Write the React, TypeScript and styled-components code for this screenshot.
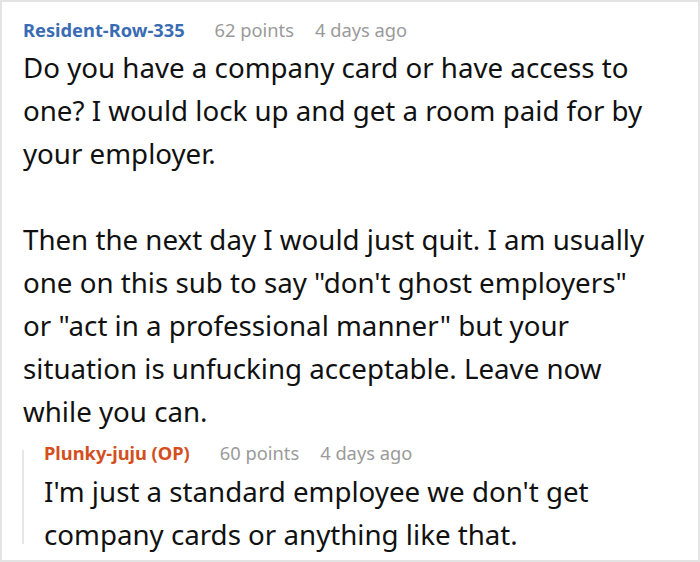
import React from "react";
import styled, { createGlobalStyle } from "styled-components";

const GlobalStyle = createGlobalStyle`
  html, body {
    margin: 0;
    padding: 0;
    background: #ffffff;
  }
  body {
    font-family: "Noto Sans", "Open Sans", sans-serif;
  }
`;

interface Comment {
  author: string;
  points: number;
  age: string;
  isOp?: boolean;
  paragraphs: string[];
}

const comment: Comment = {
  author: "Resident-Row-335",
  points: 62,
  age: "4 days ago",
  paragraphs: [
    "Do you have a company card or have access to one? I would lock up and get a room paid for by your employer.",
    "Then the next day I would just quit. I am usually one on this sub to say \"don't ghost employers\" or \"act in a professional manner\" but your situation is unfucking acceptable. Leave now while you can.",
  ],
};

const reply: Comment = {
  author: "Plunky-juju (OP)",
  points: 60,
  age: "4 days ago",
  isOp: true,
  paragraphs: [
    "I'm just a standard employee we don't get company cards or anything like that.",
  ],
};

export default function App() {
  return (
    <>
      <GlobalStyle />
      <Frame>
        <Thread>
          <Meta>
            <Author $op={comment.isOp}>{comment.author}</Author>
            <Info>{comment.points} points</Info>
            <Info>{comment.age}</Info>
          </Meta>
          <Body>
            {comment.paragraphs.map((p, i) => (
              <Paragraph key={i}>{p}</Paragraph>
            ))}
          </Body>
          <Reply>
            <Meta>
              <Author $op={reply.isOp}>{reply.author}</Author>
              <Info>{reply.points} points</Info>
              <Info>{reply.age}</Info>
            </Meta>
            <ReplyBody>
              {reply.paragraphs.map((p, i) => (
                <Paragraph key={i}>{p}</Paragraph>
              ))}
            </ReplyBody>
          </Reply>
        </Thread>
      </Frame>
    </>
  );
}

const Frame = styled.div`
  width: 700px;
  height: 562px;
  box-sizing: border-box;
  border: 2px solid #e3e3e3;
  overflow: hidden;
  background: #fff;
`;

const Thread = styled.div`
  padding: 16px 48px 0 21px;
`;

const Meta = styled.div`
  display: flex;
  align-items: baseline;
  gap: 21px;
  height: 24px;
  line-height: 24px;
`;

const Author = styled.span<{ $op?: boolean }>`
  font-size: 18.3px;
  font-weight: 700;
  color: ${(p) => (p.$op ? "#d34f1e" : "#3a6cb3")};
  margin-right: 9px;
`;

const Info = styled.span`
  font-size: 18.3px;
  color: #9a9a9a;
`;

const Body = styled.div`
  margin-top: 4px;
`;

const ReplyBody = styled.div`
  margin-top: 5px;
`;

const Paragraph = styled.p`
  margin: 0 0 43px;
  font-size: 27.7px;
  line-height: 43px;
  color: #111;
  &:last-child {
    margin-bottom: 0;
  }
`;

const Reply = styled.div`
  position: relative;
  margin-top: 5px;
  margin-left: -1px;
  padding: 3px 0 2px 22px;

  /* thread line, starts level with the reply header */
  &::before {
    content: "";
    position: absolute;
    left: 0;
    top: 12px;
    bottom: 14px;
    width: 2px;
    background: #e6e6e6;
  }
`;
